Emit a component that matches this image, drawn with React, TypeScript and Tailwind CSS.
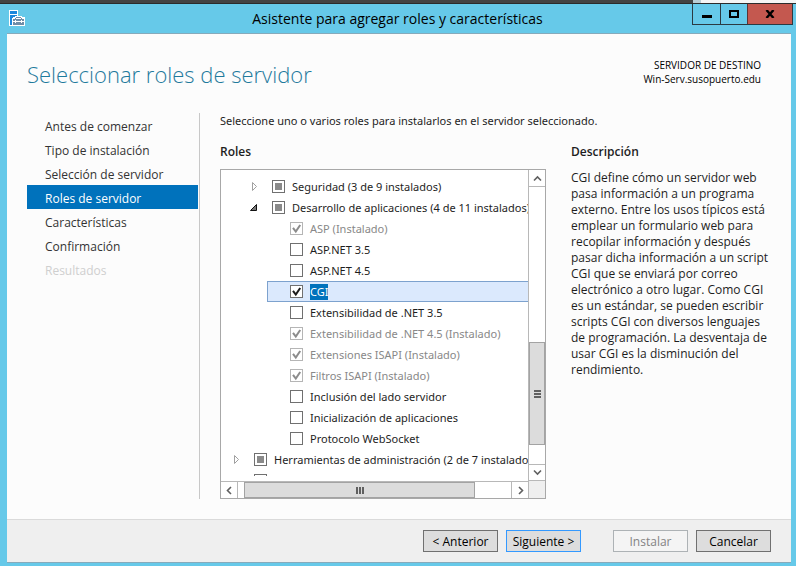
import type { ReactNode } from "react";

type State = "off" | "on" | "mixed" | "installed";

interface Role {
  label: string;
  level: 0 | 1 | 2;
  state: State;
  expander?: "open" | "closed";
  selected?: boolean;
}

const steps = [
  "Antes de comenzar",
  "Tipo de instalación",
  "Selección de servidor",
  "Roles de servidor",
  "Características",
  "Confirmación",
  "Resultados",
];
const currentStep = 3;

const roles: Role[] = [
  { label: "Seguridad (3 de 9 instalados)", level: 1, state: "mixed", expander: "closed" },
  { label: "Desarrollo de aplicaciones (4 de 11 instalados)", level: 1, state: "mixed", expander: "open" },
  { label: "ASP (Instalado)", level: 2, state: "installed" },
  { label: "ASP.NET 3.5", level: 2, state: "off" },
  { label: "ASP.NET 4.5", level: 2, state: "off" },
  { label: "CGI", level: 2, state: "on", selected: true },
  { label: "Extensibilidad de .NET 3.5", level: 2, state: "off" },
  { label: "Extensibilidad de .NET 4.5 (Instalado)", level: 2, state: "installed" },
  { label: "Extensiones ISAPI (Instalado)", level: 2, state: "installed" },
  { label: "Filtros ISAPI (Instalado)", level: 2, state: "installed" },
  { label: "Inclusión del lado servidor", level: 2, state: "off" },
  { label: "Inicialización de aplicaciones", level: 2, state: "off" },
  { label: "Protocolo WebSocket", level: 2, state: "off" },
  { label: "Herramientas de administración (2 de 7 instalados)", level: 0, state: "mixed", expander: "closed" },
  { label: "", level: 0, state: "off", expander: "closed" },
];

const indents = ["pl-[10px]", "pl-7", "pl-[46px]"];

function ServerIcon() {
  return (
    <svg className="size-4 shrink-0" viewBox="0 0 16 16" shapeRendering="crispEdges" aria-hidden="true">
      <path d="M0 0h9v6h4v1h3v9H0z" fill="#fff" />
      <path d="M1 1h7v3H1zM1 5h7v1H6v1H4v1H3v7H1z" fill="#1b87dc" />
      <path d="M7 7h5v1h1v1h2v6H4V9h2V8h1z" fill="#6f8da8" />
      <path d="M7 8h5v1H7zM4 11h2v-1h1v1h5v-1h1v1h2v1h-2v1h-1v-1H7v1H6v-1H4z" fill="#fff" />
    </svg>
  );
}

function Expander({ kind }: { kind: "open" | "closed" }) {
  return (
    <button type="button" aria-label={kind === "open" ? "Contraer" : "Expandir"} className="flex size-full items-center">
      <svg className="h-[11px] w-[9px]" viewBox="0 0 9 11" aria-hidden="true">
        {kind === "open" ? (
          <path d="M7.5 2.5v6h-6z" fill="#777" stroke="#111" />
        ) : (
          <path d="M3.5 1.5v8l4-4z" fill="#fff" stroke="#a0a0a0" />
        )}
      </svg>
    </button>
  );
}

function CheckBox({ id, state }: { id: string; state: State }) {
  const installed = state === "installed";
  return (
    <span className="grid size-[13px] shrink-0">
      <input
        id={id}
        type="checkbox"
        defaultChecked={state === "on" || installed}
        disabled={installed}
        className="col-start-1 row-start-1 size-[13px] appearance-none border border-[#707070] bg-white disabled:border-[#b5b5b5]"
      />
      {state === "mixed" && (
        <span className="pointer-events-none col-start-1 row-start-1 size-[7px] place-self-center bg-[#8a8a8a]" />
      )}
      {(state === "on" || installed) && (
        <svg className="pointer-events-none col-start-1 row-start-1 size-[13px]" viewBox="0 0 13 13" aria-hidden="true">
          <path d="M3 5.8 5.8 9.6 10.2 3" fill="none" stroke={installed ? "#8c8c8c" : "#1c1c1c"} strokeWidth="2" />
        </svg>
      )}
    </span>
  );
}

function RoleRow({ role, id }: { role: Role; id: string }) {
  return (
    <li className={`flex h-[21px] shrink-0 ${indents[role.level]}`}>
      {role.expander && (
        <span className="w-[23px] shrink-0">
          <Expander kind={role.expander} />
        </span>
      )}
      <div
        className={`flex min-w-0 flex-1 items-center ${
          role.level === 2 ? "border-y border-l pl-[22px]" : ""
        } ${role.selected ? "border-[#7da2ce] bg-[#dbe9fd]" : "border-transparent"}`}
      >
        <CheckBox id={id} state={role.state} />
        <label
          htmlFor={id}
          className={`ml-[7px] whitespace-nowrap ${role.state === "installed" ? "text-[#888]" : ""} ${
            role.selected ? "bg-[#0072bc] text-white" : ""
          }`}
        >
          {role.label}
        </label>
      </div>
    </li>
  );
}

function ScrollButton({ label, d, className }: { label: string; d: string; className: string }) {
  return (
    <button type="button" aria-label={label} className={`grid shrink-0 place-items-center border-[#b8b8b8] bg-white ${className}`}>
      <svg className="size-[9px]" viewBox="0 0 9 9" aria-hidden="true">
        <path d={d} fill="none" stroke="#606060" strokeWidth="1.6" />
      </svg>
    </button>
  );
}

function VerticalScroll() {
  return (
    <div className="flex w-[17px] shrink-0 flex-col border-l border-[#b8b8b8]">
      <ScrollButton label="Subir" d="M1 6.5 4.5 3 8 6.5" className="h-[17px] border-b" />
      <div className="grow-[156] basis-0" />
      <div className="flex grow-[102] basis-0 flex-col items-center justify-center gap-px border border-[#a3a3a3] bg-[#dcdcdc]">
        <i className="h-[2px] w-[7px] bg-[#606060]" />
        <i className="h-[2px] w-[7px] bg-[#606060]" />
        <i className="h-[2px] w-[7px] bg-[#606060]" />
      </div>
      <div className="grow-[19] basis-0" />
      <ScrollButton label="Bajar" d="M1 2.5 4.5 6 8 2.5" className="h-[17px] border-y" />
    </div>
  );
}

function HorizontalScroll() {
  return (
    <div className="flex h-[17px] shrink-0">
      <div className="flex flex-1 border-t border-[#b8b8b8]">
        <ScrollButton label="Izquierda" d="M6 1 2.5 4.5 6 8" className="w-[17px] border-r" />
        <div className="grow-[6] basis-0" />
        <div className="flex grow-[231] basis-0 items-center justify-center gap-px border border-[#a3a3a3] bg-[#dcdcdc]">
          <i className="h-[7px] w-[2px] bg-[#606060]" />
          <i className="h-[7px] w-[2px] bg-[#606060]" />
          <i className="h-[7px] w-[2px] bg-[#606060]" />
        </div>
        <div className="grow-[36] basis-0" />
        <ScrollButton label="Derecha" d="M3 1 6.5 4.5 3 8" className="w-[18px] border-x" />
      </div>
      <div className="w-4 bg-[#efefef]" />
    </div>
  );
}

function WizardButton({ children, tone = "normal" }: { children: ReactNode; tone?: "normal" | "default" | "disabled" }) {
  const tones = {
    normal: "border-[#707070] bg-[#dddddd]",
    default: "border-[#3399ff] bg-[#dddddd]",
    disabled: "border-[#adb2b5] bg-[#f4f4f4] text-[#838383]",
  };
  return (
    <button type="button" disabled={tone === "disabled"} className={`h-[22px] w-[75px] border pt-px text-center leading-5 ${tones[tone]}`}>
      {children}
    </button>
  );
}

export default function App() {
  return (
    <div className="flex min-h-screen flex-col bg-[#66c9e9] font-['Open_Sans','Noto_Sans',sans-serif] text-[12px] leading-4 text-[#1e1e1e]">
      <div className="flex h-1 border-b border-[#2b2b2b] bg-[#434343]">
        <div className="ml-auto w-[103px] border-l-8 border-[#b9cdd4] bg-[#f5f5f5]" />
      </div>
      <header className="flex h-[29px] items-start pr-[3px] pl-[9px]">
        <span className="pt-[6px]">
          <ServerIcon />
        </span>
        <h1 className="flex-1 pt-1 pl-[78px] text-center text-[14px] leading-[22px] text-black">
          Asistente para agregar roles y características
        </h1>
        <div className="flex h-[21px] border-x border-b border-[#2b3a42]">
          <button type="button" aria-label="Minimizar" className="grid w-[27px] place-items-center">
            <span className="mt-1 h-[3px] w-[10px] bg-black" />
          </button>
          <button type="button" aria-label="Maximizar" className="grid w-[27px] place-items-center border-l border-[#2b3a42]">
            <span className="h-2 w-[10px] border-2 border-black" />
          </button>
          <button type="button" aria-label="Cerrar" className="grid w-[45px] place-items-center border-l border-[#5b3434] bg-[#c4584f]">
            <svg className="h-2 w-[10px]" viewBox="0 0 10 8" aria-hidden="true">
              <path d="M1.5 0 8.5 8M8.5 0 1.5 8" stroke="#000" strokeWidth="2.4" />
            </svg>
          </button>
        </div>
      </header>

      <div className="mr-[5px] mb-[3px] ml-[7px] flex flex-1 flex-col border-y border-[#86aabb] bg-[#fcfcfc]">
        <div className="flex items-start justify-between pt-6 pr-[30px] pl-5">
          <h2 className="text-[22px] leading-8 font-light text-[#1f7a9c]">Seleccionar roles de servidor</h2>
          <div className="text-right text-[10px] leading-[14px] text-black">
            <p>SERVIDOR DE DESTINO</p>
            <p>Win-Serv.susopuerto.edu</p>
          </div>
        </div>

        <div className="flex flex-1 pt-[23px] pr-5 pb-5 pl-5">
          <nav className="w-[173px] shrink-0 border-r border-[#c8c8c8] pr-px">
            <ol>
              {steps.map((step, i) => (
                <li key={step}>
                  <a
                    href="#"
                    aria-current={i === currentStep ? "step" : undefined}
                    className={`block h-6 pt-[2px] pl-[18px] leading-6 ${
                      i === currentStep ? "bg-[#0072bc] text-white" : i === steps.length - 1 ? "text-[#cfcfcf]" : "text-[#333]"
                    }`}
                  >
                    {step}
                  </a>
                </li>
              ))}
            </ol>
          </nav>

          <main className="min-w-0 flex-1 pl-5">
            <p className="font-['Noto_Sans','Open_Sans',sans-serif] text-[11px]">
              Seleccione uno o varios roles para instalarlos en el servidor seleccionado.
            </p>
            <div className="grid grid-cols-[minmax(0,326fr)_minmax(0,200fr)] gap-x-[25px] pt-[15px]">
              <section>
                <h3 className="font-semibold">Roles</h3>
                <div className="mt-[9px] flex h-[330px] flex-col border border-[#a8a8a8] bg-white">
                  <div className="flex min-h-0 flex-1">
                    <ul className="mb-[5px] flex min-w-0 flex-1 flex-col overflow-hidden pt-[6px] font-['Noto_Sans','Open_Sans',sans-serif] text-[11px]">
                      {roles.map((role, i) => (
                        <RoleRow key={i} id={`role-${i}`} role={role} />
                      ))}
                    </ul>
                    <VerticalScroll />
                  </div>
                  <HorizontalScroll />
                </div>
              </section>
              <section>
                <h3 className="font-semibold">Descripción</h3>
                <p className="pt-[10px]">
                  CGI define cómo un servidor web pasa información a un programa externo. Entre los usos típicos está
                  emplear un formulario web para recopilar información y después pasar dicha información a un script
                  CGI que se enviará por correo electrónico a otro lugar. Como CGI es un estándar, se pueden escribir
                  scripts CGI con diversos lenguajes de programación. La desventaja de usar CGI es la disminución del
                  rendimiento.
                </p>
              </section>
            </div>
          </main>
        </div>

        <footer className="flex h-[43px] items-start justify-end gap-2 border-t border-[#dadada] bg-[#efefef] pt-[10px] pr-5 text-black">
          <WizardButton>&lt; Anterior</WizardButton>
          <WizardButton tone="default">Siguiente &gt;</WizardButton>
          <span className="w-4" />
          <WizardButton tone="disabled">Instalar</WizardButton>
          <WizardButton>Cancelar</WizardButton>
        </footer>
      </div>
    </div>
  );
}
